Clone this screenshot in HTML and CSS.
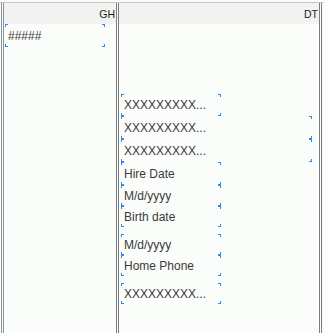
FILE: index.html
```html
<!DOCTYPE html>
<html>
<head>
	<title>Report layout</title>
	<link rel="stylesheet" href="styles.css">
</head>
<body>

	<div class="sheet">
		<div class="col col-gh">
			<div class="hd">GH</div>
			<div class="bd">
				<div class="fld sel fld-gh">#####</div>
			</div>
		</div>

		<div class="col col-dt">
			<div class="hd">DT</div>
			<div class="bd bd-dt">
				<div class="fld sel">XXXXXXXXX...</div>
				<div class="fld sel wide tall">XXXXXXXXX...</div>
				<div class="fld sel wide tall">XXXXXXXXX...</div>
				<div class="fld sel tall">Hire Date</div>
				<div class="fld sel short">M/d/yyyy</div>
				<div class="fld sel short">Birth date</div>
				<div class="fld sel short gap">M/d/yyyy</div>
				<div class="fld sel short">Home Phone</div>
				<div class="fld sel short gap">XXXXXXXXX...</div>
			</div>
		</div>
	</div>

</body>
</html>
```

FILE: styles.css
```css
		*{
			box-sizing: border-box;
		}
		body{
			margin: 0;
			background: #fbfdfb;
			font-family: "Liberation Sans", Arial, sans-serif;
			font-size: 12px;
			color: #3a3a3a;
		}

		.sheet{
			display: flex;
			margin-top: 2px;
			height: 331px;
			border-top: 1px solid #c6c6c6;
		}

		.col{
			display: flex;
			flex-direction: column;
			border-right: 3px double #7c7c7c;
		}
		.col-gh{
			width: 118px;
			margin-left: 1px;
			border-left: 3px double #8a949a;
		}
		.col-dt{
			width: 203px;
		}

		.hd{
			height: 21px;
			flex: none;
			display: flex;
			align-items: center;
			justify-content: flex-end;
			padding-right: 1px;
			background: #f2f3f1;
			font-size: 10.5px;
			color: #1c1c1c;
		}

		.bd{
			flex: 1;
			padding-left: 1px;
		}
		.bd-dt{
			padding-top: 70px;
			padding-left: 2px;
		}

		.fld{
			width: 100px;
			height: 22px;
			display: flex;
			align-items: center;
			padding-left: 3px;
			white-space: nowrap;
		}
		.fld.wide{
			width: 191px;
		}
		.fld.tall{
			height: 23px;
		}
		.fld.short{
			height: 21px;
		}
		.fld.gap{
			margin-top: 7px;
		}
		.fld-gh{
			height: 23px;
		}

		/* selection corner marks */
		.sel{
			--m: #2b8cf4;
			background:
				linear-gradient(var(--m), var(--m)) 0 0 / 3px 1px,
				linear-gradient(var(--m), var(--m)) 0 0 / 1px 3px,
				linear-gradient(var(--m), var(--m)) 100% 0 / 3px 1px,
				linear-gradient(var(--m), var(--m)) 100% 0 / 1px 3px,
				linear-gradient(var(--m), var(--m)) 0 100% / 3px 1px,
				linear-gradient(var(--m), var(--m)) 0 100% / 1px 3px,
				linear-gradient(var(--m), var(--m)) 100% 100% / 3px 1px,
				linear-gradient(var(--m), var(--m)) 100% 100% / 1px 3px;
			background-repeat: no-repeat;
		}
```
